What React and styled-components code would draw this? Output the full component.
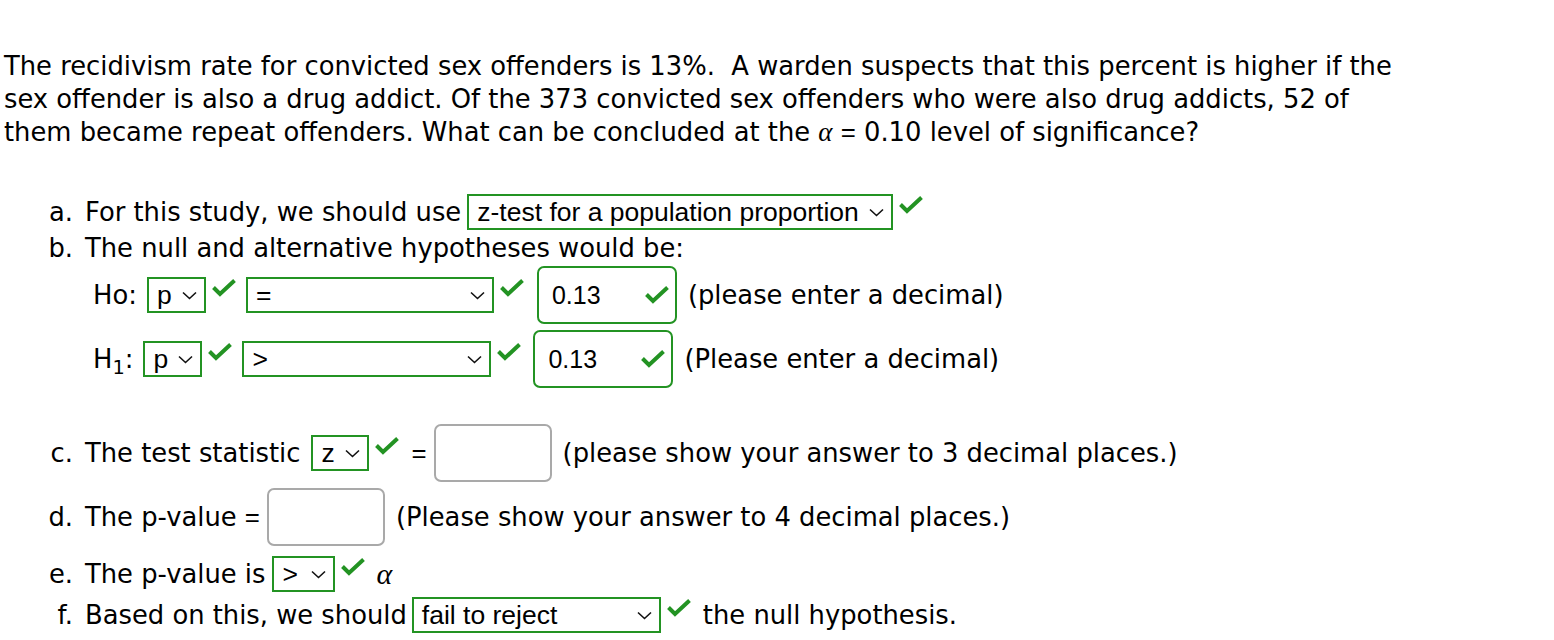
import React from 'react'
import styled, { createGlobalStyle } from 'styled-components'

const GREEN = '#239323'

const Global = createGlobalStyle`
  body {
    margin: 0;
    background: #fff;
    color: #000;
    font-family: "DejaVu Sans", "Noto Sans", sans-serif;
  }
`

const Page = styled.div`
  padding: 50px 0 0 4px;
  font-size: 25.8px;
  height: 590px;
  overflow: hidden;
`

const Question = styled.p`
  margin: 0;
  line-height: 33px;
  white-space: nowrap;
`

const Parts = styled.div`
  margin-top: 45px;
`

const Row = styled.div`
  display: flex;
  align-items: center;
  height: ${p => p.$h}px;
  margin-top: ${p => p.$mt || 0}px;
  padding-left: ${p => p.$indent || 0}px;
  white-space: nowrap;
`

const Marker = styled.span`
  width: 69px;
  text-align: right;
  padding-right: 12px;
  flex: none;
`

const Label = styled.span`
  margin-right: ${p => p.$mr || 0}px;
  margin-left: ${p => p.$ml || 0}px;
`

const Eq = styled.span`
  font-family: "Liberation Sans", Arial, sans-serif;
  margin-left: ${p => p.$ml || 0}px;
`

const Sub = styled.sub`
  font-size: 0.75em;
  vertical-align: -6px;
  line-height: 0;
`

const Choice = styled.span`
  display: inline-flex;
  align-items: flex-start;
  gap: 6px;
  margin: 0 ${p => p.$mr || 0}px 0 ${p => p.$ml || 0}px;
`

const SelectBox = styled.span`
  box-sizing: border-box;
  display: flex;
  align-items: center;
  justify-content: space-between;
  width: ${p => p.$w}px;
  height: 36px;
  padding: 0 7px 0 8px;
  border: 2px solid ${GREEN};
  font-family: "Liberation Sans", Arial, sans-serif;
  font-size: 26.5px;
`

const Field = styled.span`
  box-sizing: border-box;
  display: flex;
  align-items: center;
  justify-content: space-between;
  width: ${p => p.$w}px;
  height: 58px;
  padding: 0 6px 0 13px;
  border: 2px solid ${p => (p.$ok ? GREEN : '#a9a9a9')};
  border-radius: 7px;
  font-family: "Liberation Sans", Arial, sans-serif;
  font-size: 25px;
  margin: 0 ${p => p.$mr || 0}px 0 ${p => p.$ml || 0}px;
`

const Alpha = styled.i`
  font-family: "Liberation Serif", "DejaVu Serif", serif;
  font-size: ${p => p.$size || 27}px;
  margin-left: ${p => p.$ml || 0}px;
`

const Chevron = () => (
  <svg width="15" height="9" viewBox="0 0 15 9">
    <path d="M1 1.5 L7.5 7.5 L14 1.5" fill="none" stroke="#111" strokeWidth="1.6" />
  </svg>
)

const Check = ({ style }) => (
  <svg width="24" height="18" viewBox="0 0 24 18" style={style}>
    <path d="M1.5 8.5 L8 15 L22.5 1.5" fill="none" stroke={GREEN} strokeWidth="4" />
  </svg>
)

const Select = ({ w, value, ml, mr }) => (
  <Choice $ml={ml} $mr={mr}>
    <SelectBox $w={w}>
      <span>{value}</span>
      <Chevron />
    </SelectBox>
    <Check style={{ marginTop: 2 }} />
  </Choice>
)

export default function App() {
  return (
    <Page>
      <Global />
      <Question>
        The recidivism rate for convicted sex offenders is 13%.&nbsp; A warden suspects that this percent is higher if the
        <br />
        sex offender is also a drug addict. Of the 373 convicted sex offenders who were also drug addicts, 52 of
        <br />
        them became repeat offenders. What can be concluded at the <Alpha>α</Alpha> <Eq>=</Eq> 0.10 level of significance?
      </Question>
      <Parts>
        <Row $h={36}>
          <Marker>a.</Marker>
          <Label>For this study, we should use</Label>
          <Select w={426} value="z-test for a population proportion" ml={6} />
        </Row>
        <Row $h={36}>
          <Marker>b.</Marker>
          <Label>The null and alternative hypotheses would be:</Label>
        </Row>
        <Row $h={58} $indent={89}>
          <Label>Ho:</Label>
          <Select w={59} value="p" ml={10} />
          <Select w={248} value="=" ml={10} />
          <Field $w={140} $ok $ml={13}>
            <span>0.13</span>
            <Check />
          </Field>
          <Label $ml={11}>(please enter a decimal)</Label>
        </Row>
        <Row $h={58} $mt={6} $indent={89}>
          <Label>H<Sub>1</Sub>:</Label>
          <Select w={59} value="p" ml={10} />
          <Select w={249} value=">" ml={10} />
          <Field $w={140} $ok $ml={12}>
            <span>0.13</span>
            <Check />
          </Field>
          <Label $ml={11}>(Please enter a decimal)</Label>
        </Row>
        <Row $h={58} $mt={36}>
          <Marker>c.</Marker>
          <Label>The test statistic</Label>
          <Select w={58} value="z" ml={11} />
          <Eq $ml={12}>=</Eq>
          <Field $w={118} $ml={7} />
          <Label $ml={11}>(please show your answer to 3 decimal places.)</Label>
        </Row>
        <Row $h={58} $mt={6}>
          <Marker>d.</Marker>
          <Label>The p-value <Eq>=</Eq></Label>
          <Field $w={118} $ml={7} />
          <Label $ml={11}>(Please show your answer to 4 decimal places.)</Label>
        </Row>
        <Row $h={36} $mt={10}>
          <Marker>e.</Marker>
          <Label>The p-value is</Label>
          <Select w={63} value=">" ml={7} />
          <Alpha $ml={11} $size={30}>α</Alpha>
        </Row>
        <Row $h={36} $mt={5}>
          <Marker>f.</Marker>
          <Label>Based on this, we should</Label>
          <Select w={249} value="fail to reject" ml={5} />
          <Label $ml={12}>the null hypothesis.</Label>
        </Row>
        <Row $h={36} $mt={4}>
          <Marker>g.</Marker>
          <Label>Thus, the final conclusion is that ...</Label>
        </Row>
      </Parts>
    </Page>
  )
}
